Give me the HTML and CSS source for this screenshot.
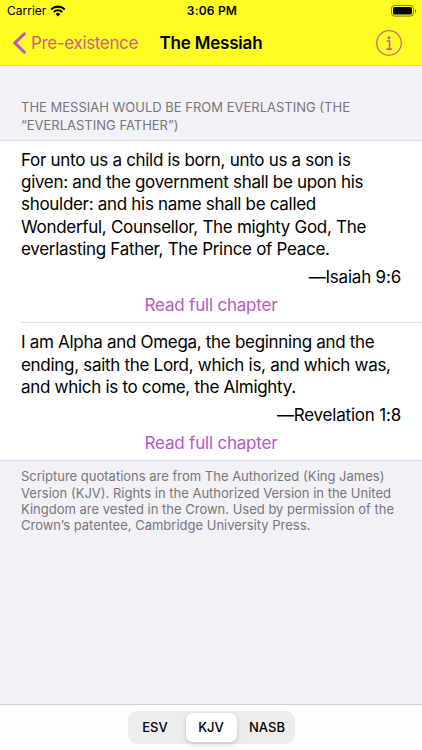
FILE: index.html
```html
<!DOCTYPE html>
<html lang="en">
<head>
    <meta charset="UTF-8">
    <meta name="viewport" content="width=device-width, initial-scale=1.0">
    <title>The Messiah</title>
    <link rel="stylesheet" href="styles.css">
</head>
<body>
    <div class="status-bar">
        <div class="carrier">
            <span>Carrier</span>
            <svg class="wifi" width="16" height="12" viewBox="0 0 16 12">
                <path d="M1.2 4.4a9.8 9.8 0 0 1 13.6 0" fill="none" stroke="#000" stroke-width="2.1"/>
                <path d="M3.7 7.1a6.2 6.2 0 0 1 8.6 0" fill="none" stroke="#000" stroke-width="2"/>
                <path d="M5.6 9a3.5 3.5 0 0 1 4.8 0L8 11.4z"/>
            </svg>
        </div>
        <div class="time">3:06 PM</div>
        <svg class="battery" width="26" height="12" viewBox="0 0 26 12">
            <rect x="0.5" y="0.5" width="22" height="10.6" rx="3" fill="none" stroke="#000" stroke-opacity="0.5"/>
            <rect x="2" y="2" width="19" height="7.6" rx="1.7"/>
            <path d="M24 4v3.8c1.6-.6 1.6-3.2 0-3.8z" fill-opacity="0.6"/>
        </svg>
    </div>
    <div class="nav-bar">
        <a class="back" href="#">
            <svg width="13" height="22" viewBox="0 0 13 22">
                <path d="M11.4 1.8L2 11l9.4 9.2" fill="none" stroke="#b757c9" stroke-width="3" stroke-linecap="round"/>
            </svg>
            <span>Pre-existence</span>
        </a>
        <h1>The Messiah</h1>
        <a class="info" href="#">
            <svg width="28" height="28" viewBox="0 0 28 28" fill="none" stroke="#cb6480">
                <circle cx="14" cy="14" r="12.3" stroke-width="1.2"/>
                <circle cx="14" cy="8.7" r="1.5" fill="#c55f9a" stroke="none"/>
                <path d="M11.7 12h2.8v8M11.6 20.1h5.2" stroke="#c55f9a" stroke-width="1.7"/>
            </svg>
        </a>
    </div>
    <div class="content">
        <div class="section-header">THE MESSIAH WOULD BE FROM EVERLASTING (THE<br>“EVERLASTING FATHER”)</div>
        <div class="verses">
            <div class="verse">
                <p>For unto us a child is born, unto us a son is<br>given: and the government shall be upon his<br>shoulder: and his name shall be called<br>Wonderful, Counsellor, The mighty God, The<br>everlasting Father, The Prince of Peace.</p>
                <div class="reference">—Isaiah 9:6</div>
                <a class="read-more" href="#">Read full chapter</a>
            </div>
            <div class="verse">
                <p>I am Alpha and Omega, the beginning and the<br>ending, saith the Lord, which is, and which was,<br>and which is to come, the Almighty.</p>
                <div class="reference">—Revelation 1:8</div>
                <a class="read-more" href="#">Read full chapter</a>
            </div>
        </div>
        <div class="section-footer">Scripture quotations are from The Authorized (King James)<br>Version (KJV). Rights in the Authorized Version in the United<br>Kingdom are vested in the Crown. Used by permission of the<br>Crown’s patentee, Cambridge University Press.</div>
    </div>
    <div class="toolbar">
        <div class="segments">
            <div class="segment">ESV</div>
            <div class="segment selected">KJV</div>
            <div class="segment">NASB</div>
        </div>
    </div>
</body>
</html>
```
FILE: styles.css
```css
* {
    box-sizing: border-box;
}

body {
    display: flex;
    flex-direction: column;
    height: 750px;
    margin: 0;
    overflow: hidden;
    background-color: #f2f1f7;
    color: #000;
    font-family: Inter, "Liberation Sans", sans-serif;
    white-space: nowrap;
}

a {
    color: #b757c9;
    text-decoration: none;
}

.status-bar {
    display: grid;
    grid-template-columns: 1fr auto 1fr;
    align-items: center;
    height: 21px;
    padding: 0 5px 0 7px;
    background-color: #fffc24;
    font-size: 12px;
}

.carrier {
    display: flex;
    align-items: center;
    gap: 4px;
}

.time {
    font-weight: 600;
    letter-spacing: 0.2px;
}

.battery {
    justify-self: end;
}

.nav-bar {
    display: grid;
    grid-template-columns: 1fr auto 1fr;
    align-items: center;
    height: 45px;
    padding: 0 19px 0 13px;
    background-color: #fffc24;
    border-bottom: 1px solid #dedb75;
    font-size: 17px;
}

.back {
    display: flex;
    align-items: center;
    gap: 5px;
    color: #cb6480;
    letter-spacing: -0.35px;
}

.nav-bar h1 {
    margin: 0 -3px 0 3px;
    font-size: 17px;
    font-weight: 600;
    letter-spacing: -0.2px;
}

.info {
    display: flex;
    justify-self: end;
}

.content {
    flex: 1;
}

.section-header {
    padding: 32px 20px 5px 21px;
    color: #77767b;
    font-size: 13px;
    line-height: 18.3px;
}

.verses {
    background-color: #fff;
    border-top: 1px solid #dddce1;
    border-bottom: 1px solid #dddce1;
}

.verse {
    margin-left: 21px;
    padding: 8px 21px 6px 0;
    font-size: 17px;
    line-height: 22.4px;
    letter-spacing: -0.2px;
}

.verse + .verse {
    border-top: 1px solid #dddde0;
}

.verse p {
    margin: 0;
    letter-spacing: -0.3px;
}

.reference {
    margin-top: 5px;
    text-align: right;
}

.read-more {
    display: block;
    margin-top: 6px;
    text-align: center;
}

.section-footer {
    padding: 7px 20px 0 21px;
    color: #77767b;
    font-size: 13px;
    line-height: 16.3px;
}

.toolbar {
    display: flex;
    justify-content: center;
    height: 46px;
    padding-top: 6px;
    background-color: #fdfdfd;
    border-top: 1px solid #cfced2;
}

.segments {
    display: flex;
    gap: 3px;
    width: 167px;
    height: 33px;
    padding: 2px 0;
    border-radius: 9px;
    background-color: #ededee;
}

.segment {
    flex: 1;
    line-height: 29px;
    text-align: center;
    font-size: 13px;
    font-weight: 500;
}

.selected {
    flex: 0 0 51px;
    border-radius: 7px;
    background-color: #fff;
    box-shadow: 0 2px 5px rgba(0, 0, 0, 0.18);
}
```
